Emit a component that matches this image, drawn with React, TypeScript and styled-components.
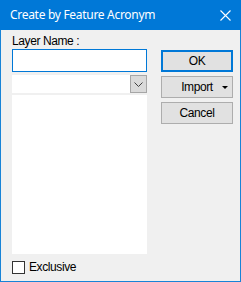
import React from 'react'
import styled, { createGlobalStyle } from 'styled-components'

const GlobalStyle = createGlobalStyle`
  html, body {
    margin: 0;
    padding: 0;
    background: #ffffff;
  }
`

const Window = styled.div`
  box-sizing: border-box;
  width: 241px;
  height: 282px;
  border: 1px solid #1883d7;
  border-top: none;
  background: #f0f0f0;
  display: flex;
  flex-direction: column;
  font-family: "Liberation Sans", Arial, sans-serif;
  font-size: 12px;
  letter-spacing: -0.4px;
  color: #000000;
`

const TitleBar = styled.div`
  height: 30px;
  margin: 0 -1px;
  background: #0078d7;
  display: flex;
  align-items: center;
  justify-content: space-between;
  padding: 0 10px 0 10px;
  color: #ffffff;
  font-family: "Noto Sans", sans-serif;
  font-size: 12px;
  letter-spacing: -0.3px;
`

const Title = styled.span`
  padding-bottom: 1px;
`

const Body = styled.div`
  flex: 1;
  display: flex;
  padding: 5px 7px 0 11px;
  gap: 14px;
`

const LeftColumn = styled.div`
  width: 135px;
  display: flex;
  flex-direction: column;
`

const Label = styled.div`
  height: 14px;
  line-height: 13px;
`

const TextInput = styled.div`
  box-sizing: border-box;
  height: 23px;
  border: 1px solid #0078d7;
  background: #ffffff;
`

const Combo = styled.div`
  margin-top: 3px;
  height: 18px;
  background: #ffffff;
  display: flex;
  justify-content: flex-end;
`

const ComboButton = styled.div`
  box-sizing: border-box;
  width: 17px;
  height: 18px;
  border: 1px solid #a6a6a6;
  background: #dadada;
  display: flex;
  align-items: center;
  justify-content: center;
`

const ListBox = styled.div`
  margin-top: 2px;
  height: 159px;
  background: #ffffff;
`

const CheckRow = styled.div`
  margin-top: 6px;
  display: flex;
  align-items: center;
  gap: 4px;
`

const CheckBox = styled.div`
  box-sizing: border-box;
  width: 13px;
  height: 13px;
  border: 1px solid #333333;
  background: #ffffff;
`

const RightColumn = styled.div`
  width: 72px;
  padding-top: 15px;
  display: flex;
  flex-direction: column;
  gap: 4px;
`

const Button = styled.div<{ $default?: boolean }>`
  box-sizing: border-box;
  position: relative;
  height: 22px;
  border: ${p => (p.$default ? '2px solid #0078d7' : '1px solid #adadad')};
  background: #e1e1e1;
  display: flex;
  align-items: center;
  justify-content: center;
`

const Caret = styled.span`
  position: absolute;
  right: 4px;
  top: 9px;
  width: 0;
  height: 0;
  border-left: 3px solid transparent;
  border-right: 3px solid transparent;
  border-top: 3px solid #000000;
`

export default function App() {
  return (
    <>
      <GlobalStyle />
      <Window>
        <TitleBar>
          <Title>Create by Feature Acronym</Title>
          <svg width="11" height="11" viewBox="0 0 11 11">
            <path d="M0.5 0.5 L10.5 10.5 M10.5 0.5 L0.5 10.5" stroke="#ffffff" strokeWidth="1.1" />
          </svg>
        </TitleBar>
        <Body>
          <LeftColumn>
            <Label>Layer Name :</Label>
            <TextInput />
            <Combo>
              <ComboButton>
                <svg width="9" height="5" viewBox="0 0 9 5">
                  <path d="M0.5 0.5 L4.5 4.5 L8.5 0.5" stroke="#404040" strokeWidth="1" fill="none" />
                </svg>
              </ComboButton>
            </Combo>
            <ListBox />
            <CheckRow>
              <CheckBox />
              <span>Exclusive</span>
            </CheckRow>
          </LeftColumn>
          <RightColumn>
            <Button $default>OK</Button>
            <Button>
              Import
              <Caret />
            </Button>
            <Button>Cancel</Button>
          </RightColumn>
        </Body>
      </Window>
    </>
  )
}
